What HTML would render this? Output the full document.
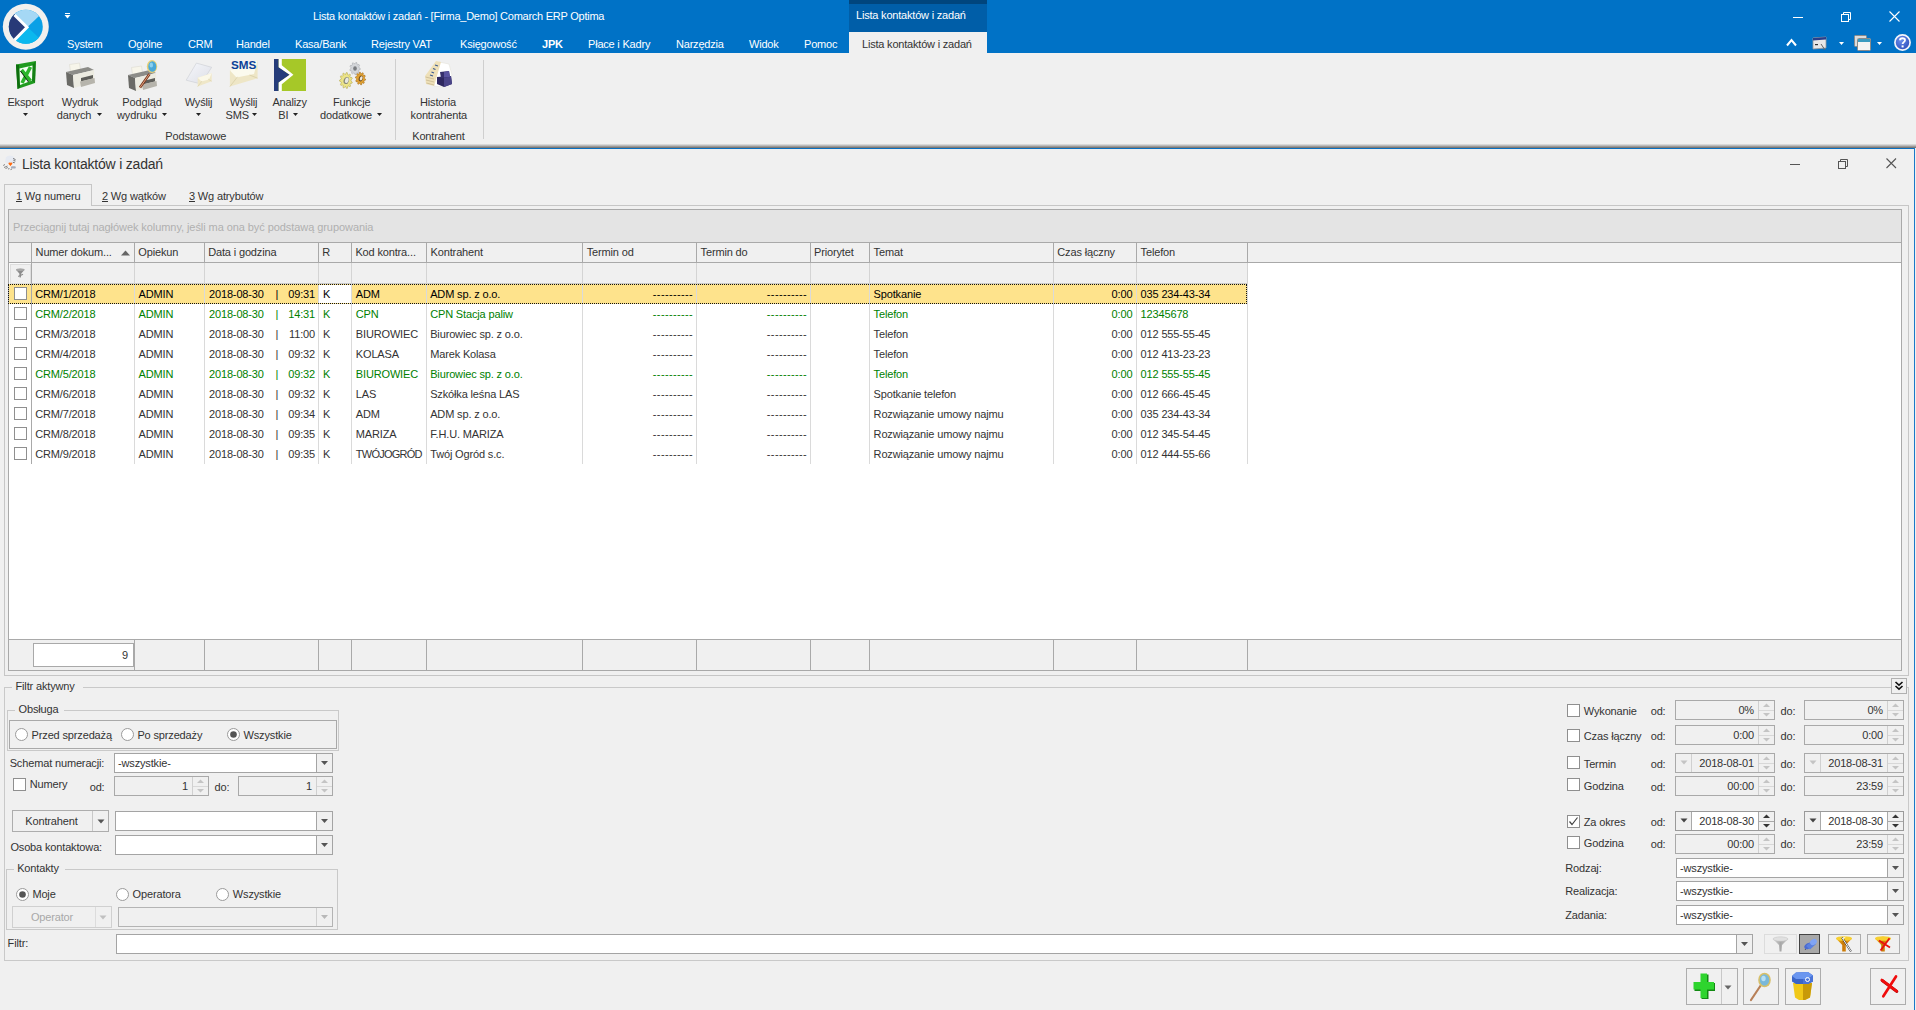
<!DOCTYPE html><html><head><meta charset="utf-8"><style>
html,body{margin:0;padding:0}
body{width:1916px;height:1010px;position:relative;overflow:hidden;background:#f0f0f0;font-family:"Liberation Sans",sans-serif;font-size:11px;color:#333}
.t{position:absolute;white-space:nowrap;letter-spacing:-0.15px}
.r{position:absolute;box-sizing:content-box}
.s{position:absolute}
</style></head><body>
<div class="r" style="left:0px;top:0px;width:1916px;height:53px;background:#0072c6;"></div>
<svg class="s" style="left:0;top:0" width="56" height="54" viewBox="0 0 56 54">
<circle cx="25.8" cy="26.8" r="23" fill="#f2f0ee"/>
<clipPath id="lc"><circle cx="25.8" cy="26.8" r="17"/></clipPath>
<g clip-path="url(#lc)">
<rect x="0" y="0" width="56" height="54" fill="#0aa0e6"/>
<polygon points="0,0 56,0 27.5,27" fill="#a5d8f5"/>
<polygon points="0,54 56,54 27.5,27" fill="#0bb8ee"/>
<polygon points="0,0 27.5,27 0,54" fill="#283a78"/>
</g>
<polyline points="14.5,15 27,27.3 14.5,40" fill="none" stroke="#ffffff" stroke-width="3"/>
</svg>
<svg class="s" style="top:13px;left:64px" width="8" height="8" viewBox="0 0 8 8"><rect x="1" y="0" width="5" height="1" fill="#fff"/><polygon points="0.5,2 6.5,2 3.5,5.5" fill="#fff"/></svg>
<div class="t " style="top:8.69px;font-size:11px;line-height:14px;color:#ffffff;letter-spacing:-0.25px;left:313px;">Lista kontaktów i zadań - [Firma_Demo] Comarch ERP Optima</div>
<div class="r" style="left:849px;top:0px;width:138px;height:4px;background:#00457d;"></div>
<div class="r" style="left:849px;top:4px;width:138px;height:28px;background:#005ea8;"></div>
<div class="r" style="left:849px;top:32px;width:138px;height:22px;background:#f0f0f0;"></div>
<div class="t " style="top:8.19px;font-size:11px;line-height:14px;color:#ffffff;letter-spacing:-0.2px;left:856px;">Lista kontaktów i zadań</div>
<div class="r" style="left:1793px;top:17px;width:10px;height:1px;background:#ffffff;"></div>
<svg class="s" style="left:1841px;top:12px" width="11" height="11" viewBox="0 0 11 11"><rect x="0.5" y="2.5" width="7" height="7" fill="none" stroke="#fff"/><polyline points="2.5,2.5 2.5,0.5 9.5,0.5 9.5,7.5 7.5,7.5" fill="none" stroke="#fff"/></svg>
<svg class="s" style="left:1889px;top:11px" width="11" height="11" viewBox="0 0 11 11"><path d="M0.5,0.5 L10.5,10.5 M10.5,0.5 L0.5,10.5" stroke="#fff" stroke-width="1.1"/></svg>
<div class="t " style="top:37.19px;font-size:11px;line-height:14px;color:#ffffff;letter-spacing:-0.2px;left:67px;">System</div>
<div class="t " style="top:37.19px;font-size:11px;line-height:14px;color:#ffffff;letter-spacing:-0.2px;left:128px;">Ogólne</div>
<div class="t " style="top:37.19px;font-size:11px;line-height:14px;color:#ffffff;letter-spacing:-0.2px;left:188px;">CRM</div>
<div class="t " style="top:37.19px;font-size:11px;line-height:14px;color:#ffffff;letter-spacing:-0.2px;left:236px;">Handel</div>
<div class="t " style="top:37.19px;font-size:11px;line-height:14px;color:#ffffff;letter-spacing:-0.2px;left:295px;">Kasa/Bank</div>
<div class="t " style="top:37.19px;font-size:11px;line-height:14px;color:#ffffff;letter-spacing:-0.2px;left:371px;">Rejestry VAT</div>
<div class="t " style="top:37.19px;font-size:11px;line-height:14px;color:#ffffff;letter-spacing:-0.2px;left:460px;">Księgowość</div>
<div class="t " style="top:37.19px;font-size:11px;line-height:14px;color:#ffffff;font-weight:bold;letter-spacing:-0.2px;left:542px;">JPK</div>
<div class="t " style="top:37.19px;font-size:11px;line-height:14px;color:#ffffff;letter-spacing:-0.2px;left:588px;">Płace i Kadry</div>
<div class="t " style="top:37.19px;font-size:11px;line-height:14px;color:#ffffff;letter-spacing:-0.2px;left:676px;">Narzędzia</div>
<div class="t " style="top:37.19px;font-size:11px;line-height:14px;color:#ffffff;letter-spacing:-0.2px;left:749px;">Widok</div>
<div class="t " style="top:37.19px;font-size:11px;line-height:14px;color:#ffffff;letter-spacing:-0.2px;left:804px;">Pomoc</div>
<div class="t " style="top:37.19px;font-size:11px;line-height:14px;color:#333;letter-spacing:-0.2px;left:862px;">Lista kontaktów i zadań</div>
<svg class="s" style="left:1786px;top:38px" width="11" height="9" viewBox="0 0 11 9"><polyline points="1,7.5 5.5,2 10,7.5" fill="none" stroke="#fff" stroke-width="2"/></svg>
<svg class="s" style="left:1812px;top:36px" width="16" height="15" viewBox="0 0 16 15">
<polygon points="1,2 14,1 14,12 1,13" fill="#e8e8e8" stroke="#9a9a9a" stroke-width="0.8"/>
<polygon points="1,2 14,1 14,3.5 1,4.5" fill="#2a3f8a"/>
<rect x="3" y="8" width="3" height="1.2" fill="#333"/><path d="M9,8 L13,14" stroke="#666" stroke-width="1"/>
</svg>
<svg class="s" style="left:1838px;top:41px" width="7" height="5" viewBox="0 0 7 5"><polygon points="1,1 6,1 3.5,4" fill="#fff"/></svg>
<svg class="s" style="left:1854px;top:35px" width="18" height="16" viewBox="0 0 18 16">
<rect x="0.5" y="0.5" width="12" height="11" rx="1" fill="#dcdcdc" stroke="#8a8a8a"/>
<rect x="3.5" y="3.5" width="13" height="12" rx="1" fill="#f4f4f4" stroke="#8a8a8a"/>
<rect x="4" y="4" width="12" height="3" fill="#3a9ac0"/>
</svg>
<svg class="s" style="left:1876px;top:41px" width="7" height="5" viewBox="0 0 7 5"><polygon points="1,1 6,1 3.5,4" fill="#fff"/></svg>
<svg class="s" style="left:1893px;top:33px" width="19" height="19" viewBox="0 0 19 19">
<defs><radialGradient id="hg" cx="0.4" cy="0.35" r="0.75"><stop offset="0" stop-color="#6c90ec"/><stop offset="1" stop-color="#2848b8"/></radialGradient></defs>
<circle cx="9.5" cy="9.5" r="7.6" fill="url(#hg)" stroke="#f2f4fa" stroke-width="1.7"/>
<path d="M7,7.2 C7,4.6 12,4.6 12,7.2 C12,9 9.6,9.2 9.6,11" fill="none" stroke="#fff" stroke-width="1.8"/>
<rect x="8.6" y="12.4" width="2" height="2" fill="#fff"/>
</svg>
<div class="r" style="left:0px;top:53px;width:1916px;height:92px;background:#f0f0f0;"></div>
<div class="s" style="left:0;top:144px;width:1916px;height:4px;background:linear-gradient(#e6e6e6,#b8b8b8 40%,#6e6a66)"></div>
<div class="r" style="left:0px;top:148px;width:1915px;height:1px;background:#0a6fc0;"></div>
<div class="r" style="left:395px;top:59px;width:1px;height:81px;background:#cfcfcf;"></div>
<div class="r" style="left:483px;top:60px;width:1px;height:79px;background:#cfcfcf;"></div>
<svg class="s" style="left:15px;top:60px" width="23" height="30" viewBox="0 0 23 30">
<polygon points="1,4.5 20.8,1 20,23 2.5,29" fill="#1f9a1f"/>
<polygon points="1,4.5 4,5 5,27.5 2.5,29" fill="#0e6e0e"/>
<polygon points="17.5,4.5 20.8,1 20,23 17,20.5" fill="#138013"/>
<polygon points="4.5,8.5 17.5,5.5 17,20.5 5,25" fill="#f4fff4"/>
<path d="M6.5,10 L15.5,21 M15.5,7 L7,23" stroke="#2cb52c" stroke-width="3.6"/>
<path d="M5.5,11 L13.5,22" stroke="#111" stroke-width="0.9"/>
</svg>
<svg class="s" style="left:65px;top:62px" width="30" height="27" viewBox="0 0 30 27">
<polygon points="4.5,2.5 14.5,1 15.5,8 5.5,9.5" fill="#f7f5ea" stroke="#dcdad0" stroke-width="0.6"/>
<polygon points="1,10 23,5 29,8 8,13" fill="#8c8c88"/>
<polygon points="1,10 8,13 9,26 2,23" fill="#6a6a66"/>
<polygon points="8,13 29,8 29.5,20 9,26" fill="#ecebe1"/>
<polygon points="16,16 28,13 28,16.5 16,19.5" fill="#5e5e5a"/>
<polygon points="15,19.5 29.5,16 30,21 16,25" fill="#b6b4ac"/>
</svg>
<svg class="s" style="left:127px;top:65px" width="30" height="27" viewBox="0 0 30 27">
<polygon points="4.5,2.5 14.5,1 15.5,8 5.5,9.5" fill="#f7f5ea" stroke="#dcdad0" stroke-width="0.6"/>
<polygon points="1,10 23,5 29,8 8,13" fill="#8c8c88"/>
<polygon points="1,10 8,13 9,26 2,23" fill="#6a6a66"/>
<polygon points="8,13 29,8 29.5,20 9,26" fill="#ecebe1"/>
<polygon points="16,16 28,13 28,16.5 16,19.5" fill="#5e5e5a"/>
<polygon points="15,19.5 29.5,16 30,21 16,25" fill="#b6b4ac"/>
</svg>
<svg class="s" style="left:137px;top:58px" width="24" height="32" viewBox="0 0 24 32">
<path d="M3,29.5 L12.5,16" stroke="#7a3a20" stroke-width="2.6"/>
<path d="M3,29.5 L12.5,16" stroke="#e0a080" stroke-width="1"/>
<ellipse cx="15" cy="8.5" rx="5.2" ry="6.5" fill="#e8d078"/>
<ellipse cx="15.3" cy="8.5" rx="4" ry="5.3" fill="#4aa8d8"/>
<ellipse cx="14.3" cy="7" rx="1.8" ry="2.6" fill="#8ad0f0"/>
</svg>
<svg class="s" style="left:185px;top:62px" width="28" height="26" viewBox="0 0 28 26">
<defs><linearGradient id="pg" x1="0" y1="0" x2="1" y2="1"><stop offset="0" stop-color="#f6f7fb"/><stop offset="1" stop-color="#dcdee6"/></linearGradient></defs>
<polygon points="11.4,1.1 26.7,5.3 16,22 1.2,18.2" fill="url(#pg)" stroke="#c4c6cc" stroke-width="0.5"/>
<polygon points="12.7,15.7 26.7,11.3 26.7,19.3 12.7,24.6" fill="#efe7c8"/>
<polygon points="12.7,15.7 26.7,11.3 24,17.5 16.5,19.5" fill="#fbf8e8"/>
<path d="M12.7,24.6 L17,19 M26.7,19.3 L23,17" stroke="#d8cea8" stroke-width="0.6"/>
</svg>
<svg class="s" style="left:229px;top:59px" width="30" height="29" viewBox="0 0 30 29">
<polygon points="0.9,11.6 28.6,1.4 28.6,19.2 0.9,27.6" fill="#eee6c6"/>
<polygon points="1,11.6 28.6,1.4 25,15 7.5,18.5" fill="#fbfaee"/>
<path d="M0.9,27.6 L8.5,17.8 M28.6,19.2 L20.5,16" stroke="#d6cca4" stroke-width="0.7"/>
<text x="2" y="10" textLength="25.3" lengthAdjust="spacingAndGlyphs" font-family="Liberation Sans" font-weight="bold" font-size="11.2" fill="#0b3f98">SMS</text>
</svg>
<svg class="s" style="left:274px;top:59px" width="32" height="32" viewBox="0 0 32 32">
<rect x="0" y="0" width="32" height="32" fill="#a6c828"/>
<polygon points="0,0 4.7,0 4.7,8.3 15.7,15.8 4.7,23.5 4.7,32 0,32" fill="#253c7a"/>
<polygon points="4.7,0 7.8,0 7.8,6.3 19.4,15.8 7.8,25.2 7.8,32 4.7,32 4.7,23.5 15.7,15.8 4.7,8.3" fill="#ffffff"/>
</svg>
<svg class="s" style="left:337px;top:61px" width="31" height="29" viewBox="0 0 31 29">
<polygon points="23.27,7.50 23.19,8.58 21.83,9.14 21.53,9.90 22.04,11.49 21.39,12.25 20.04,11.66 19.40,12.01 18.92,13.61 18.00,13.70 17.29,12.23 16.60,12.01 15.37,12.87 14.61,12.25 14.87,10.59 14.47,9.90 13.05,9.62 12.81,8.58 13.92,7.50 13.98,6.67 13.05,5.38 13.44,4.40 14.87,4.41 15.38,3.82 15.36,2.13 16.20,1.67 17.29,2.77 18.00,2.70 18.92,1.39 19.80,1.67 20.04,3.34 20.62,3.82 22.04,3.51 22.56,4.40 21.83,5.86 22.02,6.67" fill="#d4d6da" stroke="#9a9ca0" stroke-width="0.5"/>
<ellipse cx="18" cy="7.5" rx="1.8" ry="2.2" fill="#7a7c80"/>
<polygon points="15.27,21.09 15.03,22.19 13.39,22.39 13.01,23.14 13.59,25.08 12.91,25.84 11.44,24.90 10.80,25.28 10.45,27.29 9.55,27.47 8.72,25.69 8.01,25.58 6.85,27.03 6.01,26.58 6.08,24.52 5.54,23.95 3.93,24.38 3.43,23.43 4.38,21.75 4.17,20.90 2.62,20.18 2.61,19.04 4.14,18.27 4.33,17.42 3.34,15.77 3.82,14.80 5.44,15.18 5.97,14.59 5.85,12.53 6.68,12.04 7.88,13.46 8.58,13.32 9.37,11.51 10.27,11.66 10.67,13.66 11.32,14.02 12.76,13.03 13.46,13.76 12.93,15.71 13.32,16.45 14.96,16.60 15.23,17.69 13.94,18.97 13.95,19.85" fill="#ece488" stroke="#a89c40" stroke-width="0.5"/>
<ellipse cx="9.3" cy="19.5" rx="2.6" ry="3.6" fill="#8a8a78" transform="rotate(20 9.3 19.5)"/>
<ellipse cx="9.8" cy="19.3" rx="1.8" ry="2.8" fill="#e8e8e0" transform="rotate(20 9.8 19.3)"/>
<polygon points="28.59,18.14 28.45,19.13 27.16,19.51 26.86,20.20 27.32,21.76 26.74,22.45 25.52,21.82 24.95,22.16 24.59,23.75 23.79,23.89 23.10,22.48 22.48,22.34 21.44,23.36 20.73,22.88 20.84,21.23 20.40,20.66 19.08,20.73 18.73,19.82 19.59,18.56 19.51,17.79 18.41,16.86 18.55,15.87 19.84,15.49 20.14,14.80 19.68,13.24 20.26,12.55 21.48,13.18 22.05,12.84 22.41,11.25 23.21,11.11 23.90,12.52 24.52,12.66 25.56,11.64 26.27,12.12 26.16,13.77 26.60,14.34 27.92,14.27 28.27,15.18 27.41,16.44 27.49,17.21" fill="#e0a030" stroke="#986010" stroke-width="0.5"/>
<ellipse cx="23.8" cy="17.5" rx="2" ry="3" fill="#6a4a20" transform="rotate(20 23.8 17.5)"/>
<ellipse cx="24.2" cy="17.3" rx="1.3" ry="2.2" fill="#f0e8d8" transform="rotate(20 24.2 17.3)"/>
</svg>
<svg class="s" style="left:415px;top:55px" width="50" height="37" viewBox="415 55 50 37">
<polygon points="439,62 449,64 452,75 444,87 434,86" fill="#ffffff" stroke="#e4e2da" stroke-width="0.6"/>
<polygon points="436,61 441,62 434,86 426,84 425,76" fill="#eee0b8"/>
<path d="M425.5,77 L434,79 M426,80 L434,82 M426.5,83 L434,85" stroke="#c8b890" stroke-width="0.8"/>
<path d="M435,65 L438,66 M433,68.5 L435.5,69.5 M431.5,72 L434,73 M430,75 L433,76" stroke="#3a5a90" stroke-width="1.2"/>
<polygon points="437,77 451,76 452,84 444,87 437,84" fill="#2e2860"/>
<polygon points="444,78 451,76 452,84 444,87" fill="#4a4488"/>
<polygon points="440,72 449,71 450,77 441,78" fill="#36306c"/>
<polygon points="444,72 449,71 450,77 444,77.5" fill="#5a54a0"/>
</svg>
<div class="t " style="top:95.19px;font-size:11px;line-height:14px;left:-14.5px;width:80px;text-align:center;">Eksport</div>
<svg class="s" style="left:23px;top:113px" width="5" height="3" viewBox="0 0 5 3"><polygon points="0,0 5,0 2.5,3" fill="#222"/></svg>
<div class="t " style="top:95.19px;font-size:11px;line-height:14px;left:40.0px;width:80px;text-align:center;">Wydruk</div>
<div class="t " style="top:108.19px;font-size:11px;line-height:14px;left:34.0px;width:80px;text-align:center;">danych</div>
<svg class="s" style="left:97px;top:113px" width="5" height="3" viewBox="0 0 5 3"><polygon points="0,0 5,0 2.5,3" fill="#222"/></svg>
<div class="t " style="top:95.19px;font-size:11px;line-height:14px;left:102.0px;width:80px;text-align:center;">Podgląd</div>
<div class="t " style="top:108.19px;font-size:11px;line-height:14px;left:97.0px;width:80px;text-align:center;">wydruku</div>
<svg class="s" style="left:162px;top:113px" width="5" height="3" viewBox="0 0 5 3"><polygon points="0,0 5,0 2.5,3" fill="#222"/></svg>
<div class="t " style="top:95.19px;font-size:11px;line-height:14px;left:158.5px;width:80px;text-align:center;">Wyślij</div>
<svg class="s" style="left:196px;top:113px" width="5" height="3" viewBox="0 0 5 3"><polygon points="0,0 5,0 2.5,3" fill="#222"/></svg>
<div class="t " style="top:95.19px;font-size:11px;line-height:14px;left:203.5px;width:80px;text-align:center;">Wyślij</div>
<div class="t " style="top:108.19px;font-size:11px;line-height:14px;left:197.2px;width:80px;text-align:center;">SMS</div>
<svg class="s" style="left:252px;top:113px" width="5" height="3" viewBox="0 0 5 3"><polygon points="0,0 5,0 2.5,3" fill="#222"/></svg>
<div class="t " style="top:95.19px;font-size:11px;line-height:14px;left:249.60000000000002px;width:80px;text-align:center;">Analizy</div>
<div class="t " style="top:108.19px;font-size:11px;line-height:14px;left:243.39999999999998px;width:80px;text-align:center;">BI</div>
<svg class="s" style="left:293px;top:113px" width="5" height="3" viewBox="0 0 5 3"><polygon points="0,0 5,0 2.5,3" fill="#222"/></svg>
<div class="t " style="top:95.19px;font-size:11px;line-height:14px;left:311.7px;width:80px;text-align:center;">Funkcje</div>
<div class="t " style="top:108.19px;font-size:11px;line-height:14px;left:306.0px;width:80px;text-align:center;">dodatkowe</div>
<svg class="s" style="left:377px;top:113px" width="5" height="3" viewBox="0 0 5 3"><polygon points="0,0 5,0 2.5,3" fill="#222"/></svg>
<div class="t " style="top:95.19px;font-size:11px;line-height:14px;left:398.0px;width:80px;text-align:center;">Historia</div>
<div class="t " style="top:108.19px;font-size:11px;line-height:14px;left:398.8px;width:80px;text-align:center;">kontrahenta</div>
<div class="t " style="top:129.19px;font-size:11px;line-height:14px;left:145.8px;width:100px;text-align:center;">Podstawowe</div>
<div class="t " style="top:129.19px;font-size:11px;line-height:14px;left:388.4px;width:100px;text-align:center;">Kontrahent</div>
<div class="r" style="left:1914px;top:148px;width:1px;height:862px;background:#1a78c8;"></div>
<svg class="s" style="left:0px;top:150px" width="20" height="25" viewBox="0 150 20 25">
<path d="M6,157 Q9,154.5 13,156 L15.5,160 L14,163.5 L9,164 L5,162 Z" fill="#e6eaf2"/>
<path d="M13,158.5 L15.5,159.5 M13.5,160.5 L15.5,161 M12.8,162.3 L14.8,162.8" stroke="#555" stroke-width="0.8"/>
<path d="M3.2,165.5 L5,164.5 M4,167.5 L7.5,166 M5.5,168.5 L7.8,167.5" stroke="#777" stroke-width="0.9"/>
<path d="M8.6,163.2 L12.2,163.2 L10.4,166.2 Z" fill="#ff6a10"/><circle cx="9.6" cy="163.6" r="1.1" fill="#ff6a10"/><circle cx="11.2" cy="163.6" r="1.1" fill="#ff6a10"/>
<rect x="11" y="166.2" width="4.8" height="2.4" rx="1" fill="#a4acbc"/>
<path d="M8,169 L9.5,168.6 M10.5,169.6 L12,169" stroke="#666" stroke-width="0.8"/>
</svg>
<div class="t " style="top:154.85px;font-size:14px;line-height:18px;color:#333;letter-spacing:-0.2px;left:22px;">Lista kontaktów i zadań</div>
<div class="r" style="left:1790px;top:164px;width:10px;height:1px;background:#555;"></div>
<svg class="s" style="left:1838px;top:159px" width="11" height="11" viewBox="0 0 11 11"><rect x="0.5" y="2.5" width="7" height="7" fill="none" stroke="#555"/><polyline points="2.5,2.5 2.5,0.5 9.5,0.5 9.5,7.5 7.5,7.5" fill="none" stroke="#555"/></svg>
<svg class="s" style="left:1886px;top:158px" width="11" height="11" viewBox="0 0 11 11"><path d="M0.5,0.5 L10,10 M10,0.5 L0.5,10" stroke="#555" stroke-width="1.1"/></svg>
<div class="r" style="left:4px;top:184px;width:88px;height:1px;background:#c6c6c6;"></div>
<div class="r" style="left:4px;top:184px;width:1px;height:492px;background:#c6c6c6;"></div>
<div class="r" style="left:91px;top:184px;width:1px;height:22px;background:#c6c6c6;"></div>
<div class="r" style="left:91px;top:205px;width:1818px;height:1px;background:#c6c6c6;"></div>
<div class="r" style="left:1908px;top:205px;width:1px;height:471px;background:#c6c6c6;"></div>
<div class="r" style="left:4px;top:675px;width:1905px;height:1px;background:#c6c6c6;"></div>
<div class="t " style="top:188.69px;font-size:11px;line-height:14px;color:#333;left:16px;"><span style="text-decoration:underline">1</span> Wg numeru</div>
<div class="t " style="top:188.69px;font-size:11px;line-height:14px;color:#333;left:102px;"><span style="text-decoration:underline">2</span> Wg wątków</div>
<div class="t " style="top:188.69px;font-size:11px;line-height:14px;color:#333;left:189px;"><span style="text-decoration:underline">3</span> Wg atrybutów</div>
<div class="r" style="left:8px;top:209px;width:1892px;height:460px;border:1px solid #a9a9a9;background:#ffffff;"></div>
<div class="r" style="left:9px;top:210px;width:1892px;height:32px;background:#e4e4e4;"></div>
<div class="r" style="left:9px;top:242px;width:1892px;height:1px;background:#a9a9a9;"></div>
<div class="t " style="top:220.19px;font-size:11px;line-height:14px;color:#b0b0b0;letter-spacing:-0.07px;left:13px;">Przeciągnij tutaj nagłówek kolumny, jeśli ma ona być podstawą grupowania</div>
<div class="r" style="left:9px;top:243px;width:1892px;height:19px;background:#f0f0f0;"></div>
<div class="r" style="left:9px;top:262px;width:1892px;height:1px;background:#a9a9a9;"></div>
<div class="r" style="left:31px;top:243px;width:1px;height:19px;background:#a9a9a9;"></div>
<div class="r" style="left:134px;top:243px;width:1px;height:19px;background:#a9a9a9;"></div>
<div class="r" style="left:204px;top:243px;width:1px;height:19px;background:#a9a9a9;"></div>
<div class="r" style="left:318px;top:243px;width:1px;height:19px;background:#a9a9a9;"></div>
<div class="r" style="left:351px;top:243px;width:1px;height:19px;background:#a9a9a9;"></div>
<div class="r" style="left:426px;top:243px;width:1px;height:19px;background:#a9a9a9;"></div>
<div class="r" style="left:582px;top:243px;width:1px;height:19px;background:#a9a9a9;"></div>
<div class="r" style="left:696px;top:243px;width:1px;height:19px;background:#a9a9a9;"></div>
<div class="r" style="left:810px;top:243px;width:1px;height:19px;background:#a9a9a9;"></div>
<div class="r" style="left:869px;top:243px;width:1px;height:19px;background:#a9a9a9;"></div>
<div class="r" style="left:1053px;top:243px;width:1px;height:19px;background:#a9a9a9;"></div>
<div class="r" style="left:1136px;top:243px;width:1px;height:19px;background:#a9a9a9;"></div>
<div class="r" style="left:1247px;top:243px;width:1px;height:19px;background:#a9a9a9;"></div>
<div class="t " style="top:245.19px;font-size:11px;line-height:14px;color:#333;left:35.6px;">Numer dokum...</div>
<div class="t " style="top:245.19px;font-size:11px;line-height:14px;color:#333;left:138.3px;">Opiekun</div>
<div class="t " style="top:245.19px;font-size:11px;line-height:14px;color:#333;left:208.2px;">Data i godzina</div>
<div class="t " style="top:245.19px;font-size:11px;line-height:14px;color:#333;left:322.3px;">R</div>
<div class="t " style="top:245.19px;font-size:11px;line-height:14px;color:#333;left:355.4px;">Kod kontra...</div>
<div class="t " style="top:245.19px;font-size:11px;line-height:14px;color:#333;left:430.6px;">Kontrahent</div>
<div class="t " style="top:245.19px;font-size:11px;line-height:14px;color:#333;left:586.7px;">Termin od</div>
<div class="t " style="top:245.19px;font-size:11px;line-height:14px;color:#333;left:700.6px;">Termin do</div>
<div class="t " style="top:245.19px;font-size:11px;line-height:14px;color:#333;left:814px;">Priorytet</div>
<div class="t " style="top:245.19px;font-size:11px;line-height:14px;color:#333;left:873.6px;">Temat</div>
<div class="t " style="top:245.19px;font-size:11px;line-height:14px;color:#333;left:1057.3px;">Czas łączny</div>
<div class="t " style="top:245.19px;font-size:11px;line-height:14px;color:#333;left:1140.6px;">Telefon</div>
<svg class="s" style="left:121px;top:250px" width="10" height="6" viewBox="0 0 10 6"><polygon points="0,5.5 9,5.5 4.5,0.5" fill="#666"/></svg>
<div class="r" style="left:9px;top:263px;width:1239px;height:21px;background:#f0f0f0;"></div>
<div class="r" style="left:9px;top:283px;width:1239px;height:1px;background:#c8c8c8;"></div>
<div class="r" style="left:31px;top:263px;width:1px;height:21px;background:#a9a9a9;"></div>
<div class="r" style="left:134px;top:263px;width:1px;height:21px;background:#d4d4d4;"></div>
<div class="r" style="left:204px;top:263px;width:1px;height:21px;background:#d4d4d4;"></div>
<div class="r" style="left:318px;top:263px;width:1px;height:21px;background:#d4d4d4;"></div>
<div class="r" style="left:351px;top:263px;width:1px;height:21px;background:#d4d4d4;"></div>
<div class="r" style="left:426px;top:263px;width:1px;height:21px;background:#d4d4d4;"></div>
<div class="r" style="left:582px;top:263px;width:1px;height:21px;background:#d4d4d4;"></div>
<div class="r" style="left:696px;top:263px;width:1px;height:21px;background:#d4d4d4;"></div>
<div class="r" style="left:810px;top:263px;width:1px;height:21px;background:#d4d4d4;"></div>
<div class="r" style="left:869px;top:263px;width:1px;height:21px;background:#d4d4d4;"></div>
<div class="r" style="left:1053px;top:263px;width:1px;height:21px;background:#d4d4d4;"></div>
<div class="r" style="left:1136px;top:263px;width:1px;height:21px;background:#d4d4d4;"></div>
<div class="r" style="left:1247px;top:263px;width:1px;height:21px;background:#d4d4d4;"></div>
<div class="r" style="left:9px;top:263px;width:22px;height:1px;background:#fafafa;"></div>
<div class="r" style="left:9px;top:263px;width:1px;height:21px;background:#fafafa;"></div>
<div class="r" style="left:10px;top:264px;width:19px;height:18px;border:1px solid #dedede;"></div>
<svg class="s" style="left:8px;top:262px" width="24" height="22" viewBox="8 262 24 22">
<path d="M16,269.8 Q20.3,267.6 24.6,269.8 L21.3,273.5 L20.8,277.6 L19.6,277.6 L19.3,273.5 Z" fill="#8c8c8c"/>
<ellipse cx="20.3" cy="269.8" rx="4.3" ry="1.2" fill="#a8a8a8"/>
<path d="M18.2,276.6 L23,274.2" stroke="#8c8c8c" stroke-width="1.1"/>
</svg>
<div class="r" style="left:9px;top:284px;width:1239px;height:20px;background:#fee38c;"></div>
<div class="r" style="left:319px;top:285px;width:32px;height:18px;background:#ffffff;"></div>
<div class="r" style="left:31px;top:263px;width:1px;height:201px;background:#a9a9a9;"></div>
<div class="r" style="left:134px;top:284px;width:1px;height:180px;background:#dadada;"></div>
<div class="r" style="left:204px;top:284px;width:1px;height:180px;background:#dadada;"></div>
<div class="r" style="left:318px;top:284px;width:1px;height:180px;background:#dadada;"></div>
<div class="r" style="left:351px;top:284px;width:1px;height:180px;background:#dadada;"></div>
<div class="r" style="left:426px;top:284px;width:1px;height:180px;background:#dadada;"></div>
<div class="r" style="left:582px;top:284px;width:1px;height:180px;background:#dadada;"></div>
<div class="r" style="left:696px;top:284px;width:1px;height:180px;background:#dadada;"></div>
<div class="r" style="left:810px;top:284px;width:1px;height:180px;background:#dadada;"></div>
<div class="r" style="left:869px;top:284px;width:1px;height:180px;background:#dadada;"></div>
<div class="r" style="left:1053px;top:284px;width:1px;height:180px;background:#dadada;"></div>
<div class="r" style="left:1136px;top:284px;width:1px;height:180px;background:#dadada;"></div>
<div class="r" style="left:1247px;top:284px;width:1px;height:180px;background:#dadada;"></div>
<div class="s" style="left:8px;top:284px;width:1237px;height:18px;border:1px dotted #111"></div>
<div class="r" style="left:14px;top:287px;width:11px;height:11px;border:1px solid #8f8f8f;background:#ffffff;"></div>
<div class="t " style="top:287.49px;font-size:11px;line-height:14px;color:#000;left:35.2px;">CRM/1/2018</div>
<div class="t " style="top:287.49px;font-size:11px;line-height:14px;color:#000;left:138.6px;">ADMIN</div>
<div class="t " style="top:287.49px;font-size:11px;line-height:14px;color:#000;left:209px;">2018-08-30</div>
<div class="t " style="top:287.49px;font-size:11px;line-height:14px;color:#000;left:275.5px;">|</div>
<div class="t " style="top:287.49px;font-size:11px;line-height:14px;color:#000;left:255px;width:60px;text-align:right;">09:31</div>
<div class="t " style="top:287.49px;font-size:11px;line-height:14px;color:#000;left:322.9px;">K</div>
<div class="t " style="top:287.49px;font-size:11px;line-height:14px;color:#000;left:355.8px;">ADM</div>
<div class="t " style="top:287.49px;font-size:11px;line-height:14px;color:#000;left:430.2px;">ADM sp. z o.o.</div>
<div class="t " style="top:287.49px;font-size:11px;line-height:14px;color:#000;letter-spacing:0.35px;left:613px;width:80px;text-align:right;">----------</div>
<div class="t " style="top:287.49px;font-size:11px;line-height:14px;color:#000;letter-spacing:0.35px;left:727px;width:80px;text-align:right;">----------</div>
<div class="t " style="top:287.49px;font-size:11px;line-height:14px;color:#000;left:873.6px;">Spotkanie</div>
<div class="t " style="top:287.49px;font-size:11px;line-height:14px;color:#000;left:1072.4px;width:60px;text-align:right;">0:00</div>
<div class="t " style="top:287.49px;font-size:11px;line-height:14px;color:#000;left:1140.6px;">035 234-43-34</div>
<div class="r" style="left:14px;top:307px;width:11px;height:11px;border:1px solid #8f8f8f;background:#ffffff;"></div>
<div class="t " style="top:307.49px;font-size:11px;line-height:14px;color:#008000;left:35.2px;">CRM/2/2018</div>
<div class="t " style="top:307.49px;font-size:11px;line-height:14px;color:#008000;left:138.6px;">ADMIN</div>
<div class="t " style="top:307.49px;font-size:11px;line-height:14px;color:#008000;left:209px;">2018-08-30</div>
<div class="t " style="top:307.49px;font-size:11px;line-height:14px;color:#008000;left:275.5px;">|</div>
<div class="t " style="top:307.49px;font-size:11px;line-height:14px;color:#008000;left:255px;width:60px;text-align:right;">14:31</div>
<div class="t " style="top:307.49px;font-size:11px;line-height:14px;color:#008000;left:322.9px;">K</div>
<div class="t " style="top:307.49px;font-size:11px;line-height:14px;color:#008000;left:355.8px;">CPN</div>
<div class="t " style="top:307.49px;font-size:11px;line-height:14px;color:#008000;left:430.2px;">CPN Stacja paliw</div>
<div class="t " style="top:307.49px;font-size:11px;line-height:14px;color:#008000;letter-spacing:0.35px;left:613px;width:80px;text-align:right;">----------</div>
<div class="t " style="top:307.49px;font-size:11px;line-height:14px;color:#008000;letter-spacing:0.35px;left:727px;width:80px;text-align:right;">----------</div>
<div class="t " style="top:307.49px;font-size:11px;line-height:14px;color:#008000;left:873.6px;">Telefon</div>
<div class="t " style="top:307.49px;font-size:11px;line-height:14px;color:#008000;left:1072.4px;width:60px;text-align:right;">0:00</div>
<div class="t " style="top:307.49px;font-size:11px;line-height:14px;color:#008000;left:1140.6px;">12345678</div>
<div class="r" style="left:14px;top:327px;width:11px;height:11px;border:1px solid #8f8f8f;background:#ffffff;"></div>
<div class="t " style="top:327.49px;font-size:11px;line-height:14px;color:#333333;left:35.2px;">CRM/3/2018</div>
<div class="t " style="top:327.49px;font-size:11px;line-height:14px;color:#333333;left:138.6px;">ADMIN</div>
<div class="t " style="top:327.49px;font-size:11px;line-height:14px;color:#333333;left:209px;">2018-08-30</div>
<div class="t " style="top:327.49px;font-size:11px;line-height:14px;color:#333333;left:275.5px;">|</div>
<div class="t " style="top:327.49px;font-size:11px;line-height:14px;color:#333333;left:255px;width:60px;text-align:right;">11:00</div>
<div class="t " style="top:327.49px;font-size:11px;line-height:14px;color:#333333;left:322.9px;">K</div>
<div class="t " style="top:327.49px;font-size:11px;line-height:14px;color:#333333;left:355.8px;">BIUROWIEC</div>
<div class="t " style="top:327.49px;font-size:11px;line-height:14px;color:#333333;left:430.2px;">Biurowiec sp. z o.o.</div>
<div class="t " style="top:327.49px;font-size:11px;line-height:14px;color:#333333;letter-spacing:0.35px;left:613px;width:80px;text-align:right;">----------</div>
<div class="t " style="top:327.49px;font-size:11px;line-height:14px;color:#333333;letter-spacing:0.35px;left:727px;width:80px;text-align:right;">----------</div>
<div class="t " style="top:327.49px;font-size:11px;line-height:14px;color:#333333;left:873.6px;">Telefon</div>
<div class="t " style="top:327.49px;font-size:11px;line-height:14px;color:#333333;left:1072.4px;width:60px;text-align:right;">0:00</div>
<div class="t " style="top:327.49px;font-size:11px;line-height:14px;color:#333333;left:1140.6px;">012 555-55-45</div>
<div class="r" style="left:14px;top:347px;width:11px;height:11px;border:1px solid #8f8f8f;background:#ffffff;"></div>
<div class="t " style="top:347.49px;font-size:11px;line-height:14px;color:#333333;left:35.2px;">CRM/4/2018</div>
<div class="t " style="top:347.49px;font-size:11px;line-height:14px;color:#333333;left:138.6px;">ADMIN</div>
<div class="t " style="top:347.49px;font-size:11px;line-height:14px;color:#333333;left:209px;">2018-08-30</div>
<div class="t " style="top:347.49px;font-size:11px;line-height:14px;color:#333333;left:275.5px;">|</div>
<div class="t " style="top:347.49px;font-size:11px;line-height:14px;color:#333333;left:255px;width:60px;text-align:right;">09:32</div>
<div class="t " style="top:347.49px;font-size:11px;line-height:14px;color:#333333;left:322.9px;">K</div>
<div class="t " style="top:347.49px;font-size:11px;line-height:14px;color:#333333;left:355.8px;">KOLASA</div>
<div class="t " style="top:347.49px;font-size:11px;line-height:14px;color:#333333;left:430.2px;">Marek Kolasa</div>
<div class="t " style="top:347.49px;font-size:11px;line-height:14px;color:#333333;letter-spacing:0.35px;left:613px;width:80px;text-align:right;">----------</div>
<div class="t " style="top:347.49px;font-size:11px;line-height:14px;color:#333333;letter-spacing:0.35px;left:727px;width:80px;text-align:right;">----------</div>
<div class="t " style="top:347.49px;font-size:11px;line-height:14px;color:#333333;left:873.6px;">Telefon</div>
<div class="t " style="top:347.49px;font-size:11px;line-height:14px;color:#333333;left:1072.4px;width:60px;text-align:right;">0:00</div>
<div class="t " style="top:347.49px;font-size:11px;line-height:14px;color:#333333;left:1140.6px;">012 413-23-23</div>
<div class="r" style="left:14px;top:367px;width:11px;height:11px;border:1px solid #8f8f8f;background:#ffffff;"></div>
<div class="t " style="top:367.49px;font-size:11px;line-height:14px;color:#008000;left:35.2px;">CRM/5/2018</div>
<div class="t " style="top:367.49px;font-size:11px;line-height:14px;color:#008000;left:138.6px;">ADMIN</div>
<div class="t " style="top:367.49px;font-size:11px;line-height:14px;color:#008000;left:209px;">2018-08-30</div>
<div class="t " style="top:367.49px;font-size:11px;line-height:14px;color:#008000;left:275.5px;">|</div>
<div class="t " style="top:367.49px;font-size:11px;line-height:14px;color:#008000;left:255px;width:60px;text-align:right;">09:32</div>
<div class="t " style="top:367.49px;font-size:11px;line-height:14px;color:#008000;left:322.9px;">K</div>
<div class="t " style="top:367.49px;font-size:11px;line-height:14px;color:#008000;left:355.8px;">BIUROWIEC</div>
<div class="t " style="top:367.49px;font-size:11px;line-height:14px;color:#008000;left:430.2px;">Biurowiec sp. z o.o.</div>
<div class="t " style="top:367.49px;font-size:11px;line-height:14px;color:#008000;letter-spacing:0.35px;left:613px;width:80px;text-align:right;">----------</div>
<div class="t " style="top:367.49px;font-size:11px;line-height:14px;color:#008000;letter-spacing:0.35px;left:727px;width:80px;text-align:right;">----------</div>
<div class="t " style="top:367.49px;font-size:11px;line-height:14px;color:#008000;left:873.6px;">Telefon</div>
<div class="t " style="top:367.49px;font-size:11px;line-height:14px;color:#008000;left:1072.4px;width:60px;text-align:right;">0:00</div>
<div class="t " style="top:367.49px;font-size:11px;line-height:14px;color:#008000;left:1140.6px;">012 555-55-45</div>
<div class="r" style="left:14px;top:387px;width:11px;height:11px;border:1px solid #8f8f8f;background:#ffffff;"></div>
<div class="t " style="top:387.49px;font-size:11px;line-height:14px;color:#333333;left:35.2px;">CRM/6/2018</div>
<div class="t " style="top:387.49px;font-size:11px;line-height:14px;color:#333333;left:138.6px;">ADMIN</div>
<div class="t " style="top:387.49px;font-size:11px;line-height:14px;color:#333333;left:209px;">2018-08-30</div>
<div class="t " style="top:387.49px;font-size:11px;line-height:14px;color:#333333;left:275.5px;">|</div>
<div class="t " style="top:387.49px;font-size:11px;line-height:14px;color:#333333;left:255px;width:60px;text-align:right;">09:32</div>
<div class="t " style="top:387.49px;font-size:11px;line-height:14px;color:#333333;left:322.9px;">K</div>
<div class="t " style="top:387.49px;font-size:11px;line-height:14px;color:#333333;left:355.8px;">LAS</div>
<div class="t " style="top:387.49px;font-size:11px;line-height:14px;color:#333333;left:430.2px;">Szkółka leśna LAS</div>
<div class="t " style="top:387.49px;font-size:11px;line-height:14px;color:#333333;letter-spacing:0.35px;left:613px;width:80px;text-align:right;">----------</div>
<div class="t " style="top:387.49px;font-size:11px;line-height:14px;color:#333333;letter-spacing:0.35px;left:727px;width:80px;text-align:right;">----------</div>
<div class="t " style="top:387.49px;font-size:11px;line-height:14px;color:#333333;left:873.6px;">Spotkanie telefon</div>
<div class="t " style="top:387.49px;font-size:11px;line-height:14px;color:#333333;left:1072.4px;width:60px;text-align:right;">0:00</div>
<div class="t " style="top:387.49px;font-size:11px;line-height:14px;color:#333333;left:1140.6px;">012 666-45-45</div>
<div class="r" style="left:14px;top:407px;width:11px;height:11px;border:1px solid #8f8f8f;background:#ffffff;"></div>
<div class="t " style="top:407.49px;font-size:11px;line-height:14px;color:#333333;left:35.2px;">CRM/7/2018</div>
<div class="t " style="top:407.49px;font-size:11px;line-height:14px;color:#333333;left:138.6px;">ADMIN</div>
<div class="t " style="top:407.49px;font-size:11px;line-height:14px;color:#333333;left:209px;">2018-08-30</div>
<div class="t " style="top:407.49px;font-size:11px;line-height:14px;color:#333333;left:275.5px;">|</div>
<div class="t " style="top:407.49px;font-size:11px;line-height:14px;color:#333333;left:255px;width:60px;text-align:right;">09:34</div>
<div class="t " style="top:407.49px;font-size:11px;line-height:14px;color:#333333;left:322.9px;">K</div>
<div class="t " style="top:407.49px;font-size:11px;line-height:14px;color:#333333;left:355.8px;">ADM</div>
<div class="t " style="top:407.49px;font-size:11px;line-height:14px;color:#333333;left:430.2px;">ADM sp. z o.o.</div>
<div class="t " style="top:407.49px;font-size:11px;line-height:14px;color:#333333;letter-spacing:0.35px;left:613px;width:80px;text-align:right;">----------</div>
<div class="t " style="top:407.49px;font-size:11px;line-height:14px;color:#333333;letter-spacing:0.35px;left:727px;width:80px;text-align:right;">----------</div>
<div class="t " style="top:407.49px;font-size:11px;line-height:14px;color:#333333;left:873.6px;">Rozwiązanie umowy najmu</div>
<div class="t " style="top:407.49px;font-size:11px;line-height:14px;color:#333333;left:1072.4px;width:60px;text-align:right;">0:00</div>
<div class="t " style="top:407.49px;font-size:11px;line-height:14px;color:#333333;left:1140.6px;">035 234-43-34</div>
<div class="r" style="left:14px;top:427px;width:11px;height:11px;border:1px solid #8f8f8f;background:#ffffff;"></div>
<div class="t " style="top:427.49px;font-size:11px;line-height:14px;color:#333333;left:35.2px;">CRM/8/2018</div>
<div class="t " style="top:427.49px;font-size:11px;line-height:14px;color:#333333;left:138.6px;">ADMIN</div>
<div class="t " style="top:427.49px;font-size:11px;line-height:14px;color:#333333;left:209px;">2018-08-30</div>
<div class="t " style="top:427.49px;font-size:11px;line-height:14px;color:#333333;left:275.5px;">|</div>
<div class="t " style="top:427.49px;font-size:11px;line-height:14px;color:#333333;left:255px;width:60px;text-align:right;">09:35</div>
<div class="t " style="top:427.49px;font-size:11px;line-height:14px;color:#333333;left:322.9px;">K</div>
<div class="t " style="top:427.49px;font-size:11px;line-height:14px;color:#333333;left:355.8px;">MARIZA</div>
<div class="t " style="top:427.49px;font-size:11px;line-height:14px;color:#333333;left:430.2px;">F.H.U. MARIZA</div>
<div class="t " style="top:427.49px;font-size:11px;line-height:14px;color:#333333;letter-spacing:0.35px;left:613px;width:80px;text-align:right;">----------</div>
<div class="t " style="top:427.49px;font-size:11px;line-height:14px;color:#333333;letter-spacing:0.35px;left:727px;width:80px;text-align:right;">----------</div>
<div class="t " style="top:427.49px;font-size:11px;line-height:14px;color:#333333;left:873.6px;">Rozwiązanie umowy najmu</div>
<div class="t " style="top:427.49px;font-size:11px;line-height:14px;color:#333333;left:1072.4px;width:60px;text-align:right;">0:00</div>
<div class="t " style="top:427.49px;font-size:11px;line-height:14px;color:#333333;left:1140.6px;">012 345-54-45</div>
<div class="r" style="left:14px;top:447px;width:11px;height:11px;border:1px solid #8f8f8f;background:#ffffff;"></div>
<div class="t " style="top:447.49px;font-size:11px;line-height:14px;color:#333333;left:35.2px;">CRM/9/2018</div>
<div class="t " style="top:447.49px;font-size:11px;line-height:14px;color:#333333;left:138.6px;">ADMIN</div>
<div class="t " style="top:447.49px;font-size:11px;line-height:14px;color:#333333;left:209px;">2018-08-30</div>
<div class="t " style="top:447.49px;font-size:11px;line-height:14px;color:#333333;left:275.5px;">|</div>
<div class="t " style="top:447.49px;font-size:11px;line-height:14px;color:#333333;left:255px;width:60px;text-align:right;">09:35</div>
<div class="t " style="top:447.49px;font-size:11px;line-height:14px;color:#333333;left:322.9px;">K</div>
<div class="t " style="top:447.49px;font-size:11px;line-height:14px;color:#333333;letter-spacing:-0.75px;left:355.8px;">TWÓJOGRÓD</div>
<div class="t " style="top:447.49px;font-size:11px;line-height:14px;color:#333333;left:430.2px;">Twój Ogród s.c.</div>
<div class="t " style="top:447.49px;font-size:11px;line-height:14px;color:#333333;letter-spacing:0.35px;left:613px;width:80px;text-align:right;">----------</div>
<div class="t " style="top:447.49px;font-size:11px;line-height:14px;color:#333333;letter-spacing:0.35px;left:727px;width:80px;text-align:right;">----------</div>
<div class="t " style="top:447.49px;font-size:11px;line-height:14px;color:#333333;left:873.6px;">Rozwiązanie umowy najmu</div>
<div class="t " style="top:447.49px;font-size:11px;line-height:14px;color:#333333;left:1072.4px;width:60px;text-align:right;">0:00</div>
<div class="t " style="top:447.49px;font-size:11px;line-height:14px;color:#333333;left:1140.6px;">012 444-55-66</div>
<div class="r" style="left:9px;top:639px;width:1892px;height:31px;background:#f0f0f0;"></div>
<div class="r" style="left:9px;top:639px;width:1892px;height:1px;background:#a9a9a9;"></div>
<div class="r" style="left:134px;top:640px;width:1px;height:30px;background:#a9a9a9;"></div>
<div class="r" style="left:204px;top:640px;width:1px;height:30px;background:#a9a9a9;"></div>
<div class="r" style="left:318px;top:640px;width:1px;height:30px;background:#a9a9a9;"></div>
<div class="r" style="left:351px;top:640px;width:1px;height:30px;background:#a9a9a9;"></div>
<div class="r" style="left:426px;top:640px;width:1px;height:30px;background:#a9a9a9;"></div>
<div class="r" style="left:582px;top:640px;width:1px;height:30px;background:#a9a9a9;"></div>
<div class="r" style="left:696px;top:640px;width:1px;height:30px;background:#a9a9a9;"></div>
<div class="r" style="left:810px;top:640px;width:1px;height:30px;background:#a9a9a9;"></div>
<div class="r" style="left:869px;top:640px;width:1px;height:30px;background:#a9a9a9;"></div>
<div class="r" style="left:1053px;top:640px;width:1px;height:30px;background:#a9a9a9;"></div>
<div class="r" style="left:1136px;top:640px;width:1px;height:30px;background:#a9a9a9;"></div>
<div class="r" style="left:1247px;top:640px;width:1px;height:30px;background:#a9a9a9;"></div>
<div class="r" style="left:33px;top:643px;width:99px;height:22px;border:1px solid #a9a9a9;background:#ffffff;"></div>
<div class="t " style="top:648.19px;font-size:11px;line-height:14px;color:#333;left:88px;width:40px;text-align:right;">9</div>
<div class="r" style="left:4px;top:687px;width:8px;height:1px;background:#c9c9c9;"></div>
<div class="r" style="left:83px;top:687px;width:1826px;height:1px;background:#c9c9c9;"></div>
<div class="r" style="left:4px;top:687px;width:1px;height:274px;background:#c9c9c9;"></div>
<div class="r" style="left:1908px;top:687px;width:1px;height:274px;background:#c9c9c9;"></div>
<div class="r" style="left:4px;top:960px;width:1905px;height:1px;background:#c9c9c9;"></div>
<div class="t " style="top:679.49px;font-size:11px;line-height:14px;color:#333;left:15.5px;">Filtr aktywny</div>
<div class="r" style="left:1891px;top:678px;width:14px;height:14px;border:1px solid #b0b0b0;background:#f0f0f0;"></div>
<svg class="s" style="left:1893px;top:680px" width="12" height="12" viewBox="0 0 12 12"><polyline points="2.5,2 6,5.2 9.5,2" fill="none" stroke="#111" stroke-width="1.6"/><polyline points="2.5,6 6,9.2 9.5,6" fill="none" stroke="#111" stroke-width="1.6"/></svg>
<div class="r" style="left:7px;top:710px;width:8px;height:1px;background:#c9c9c9;"></div>
<div class="r" style="left:64px;top:710px;width:275px;height:1px;background:#c9c9c9;"></div>
<div class="r" style="left:7px;top:710px;width:1px;height:41px;background:#c9c9c9;"></div>
<div class="r" style="left:338px;top:710px;width:1px;height:41px;background:#c9c9c9;"></div>
<div class="r" style="left:7px;top:750px;width:332px;height:1px;background:#c9c9c9;"></div>
<div class="t " style="top:701.89px;font-size:11px;line-height:14px;color:#333;left:18.6px;">Obsługa</div>
<div class="r" style="left:9px;top:720px;width:326px;height:27px;border:1px solid #a9a9a9;"></div>
<svg class="s" style="left:15px;top:728px" width="13" height="13" viewBox="0 0 13 13"><circle cx="6.5" cy="6.5" r="6" fill="#ffffff" stroke="#9a9a9a" stroke-width="1"/></svg>
<div class="t " style="top:727.89px;font-size:11px;line-height:14px;color:#333;left:31.6px;">Przed sprzedażą</div>
<svg class="s" style="left:121px;top:728px" width="13" height="13" viewBox="0 0 13 13"><circle cx="6.5" cy="6.5" r="6" fill="#ffffff" stroke="#9a9a9a" stroke-width="1"/></svg>
<div class="t " style="top:727.89px;font-size:11px;line-height:14px;color:#333;left:137.4px;">Po sprzedaży</div>
<svg class="s" style="left:227px;top:728px" width="13" height="13" viewBox="0 0 13 13"><circle cx="6.5" cy="6.5" r="6" fill="#ffffff" stroke="#9a9a9a" stroke-width="1"/><circle cx="6.5" cy="6.5" r="3.3" fill="#555"/></svg>
<div class="t " style="top:727.89px;font-size:11px;line-height:14px;color:#333;left:243.5px;">Wszystkie</div>
<div class="t " style="top:755.79px;font-size:11px;line-height:14px;color:#333;left:9.7px;">Schemat numeracji:</div>
<div class="r" style="left:114px;top:753px;width:217px;height:18px;border:1px solid #a4a4a4;background:#ffffff;"></div>
<div class="r" style="left:317px;top:754px;width:15px;height:18px;background:#f0f0f0;"></div>
<div class="r" style="left:316px;top:754px;width:1px;height:18px;background:#a4a4a4;"></div>
<svg class="s" style="left:320.5px;top:761.0px" width="7" height="4" viewBox="0 0 7 4"><polygon points="0,0 7,0 3.5,4" fill="#555"/></svg>
<div class="t " style="top:756.19px;font-size:11px;line-height:14px;color:#333;left:118px;">-wszystkie-</div>
<div class="r" style="left:13px;top:778px;width:11px;height:11px;border:1px solid #8f8f8f;background:#ffffff;"></div>
<div class="t " style="top:777.39px;font-size:11px;line-height:14px;color:#333;left:29.7px;">Numery</div>
<div class="t " style="top:779.89px;font-size:11px;line-height:14px;color:#333;left:89.7px;">od:</div>
<div class="r" style="left:114px;top:776px;width:93px;height:18px;border:1px solid #a9a9a9;background:#f0f0f0;"></div>
<div class="r" style="left:192px;top:777px;width:1px;height:18px;background:#d0d0d0;"></div>
<div class="r" style="left:193px;top:786px;width:15px;height:1px;background:#d8d8d8;"></div>
<svg class="s" style="left:196.0px;top:778px" width="9" height="16" viewBox="0 0 9 16"><polygon points="1,5 8,5 4.5,1.5" fill="#c4c4c4"/><polygon points="1,11 8,11 4.5,14.5" fill="#c4c4c4"/></svg>
<div class="t " style="top:779.19px;font-size:11px;line-height:14px;color:#333;left:98px;width:90px;text-align:right;">1</div>
<div class="t " style="top:779.89px;font-size:11px;line-height:14px;color:#333;left:214.5px;">do:</div>
<div class="r" style="left:238px;top:776px;width:93px;height:18px;border:1px solid #a9a9a9;background:#f0f0f0;"></div>
<div class="r" style="left:316px;top:777px;width:1px;height:18px;background:#d0d0d0;"></div>
<div class="r" style="left:317px;top:786px;width:15px;height:1px;background:#d8d8d8;"></div>
<svg class="s" style="left:320.0px;top:778px" width="9" height="16" viewBox="0 0 9 16"><polygon points="1,5 8,5 4.5,1.5" fill="#c4c4c4"/><polygon points="1,11 8,11 4.5,14.5" fill="#c4c4c4"/></svg>
<div class="t " style="top:779.19px;font-size:11px;line-height:14px;color:#333;left:222px;width:90px;text-align:right;">1</div>
<div class="r" style="left:12px;top:810px;width:95px;height:20px;border:1px solid #adadad;background:#f0f0f0;"></div>
<div class="r" style="left:92px;top:811px;width:1px;height:20px;background:#c8c8c8;"></div>
<div class="t " style="top:814.39px;font-size:11px;line-height:14px;color:#333;left:11.5px;width:80px;text-align:center;">Kontrahent</div>
<svg class="s" style="left:97px;top:819px" width="8" height="5" viewBox="0 0 8 5"><polygon points="0.5,0.5 7.5,0.5 4,4.5" fill="#555"/></svg>
<div class="r" style="left:115px;top:811px;width:216px;height:18px;border:1px solid #a4a4a4;background:#ffffff;"></div>
<div class="r" style="left:317px;top:812px;width:15px;height:18px;background:#f0f0f0;"></div>
<div class="r" style="left:316px;top:812px;width:1px;height:18px;background:#a4a4a4;"></div>
<svg class="s" style="left:320.5px;top:819.0px" width="7" height="4" viewBox="0 0 7 4"><polygon points="0,0 7,0 3.5,4" fill="#555"/></svg>
<div class="t " style="top:839.69px;font-size:11px;line-height:14px;color:#333;left:10.4px;">Osoba kontaktowa:</div>
<div class="r" style="left:115px;top:835px;width:216px;height:18px;border:1px solid #a4a4a4;background:#ffffff;"></div>
<div class="r" style="left:317px;top:836px;width:15px;height:18px;background:#f0f0f0;"></div>
<div class="r" style="left:316px;top:836px;width:1px;height:18px;background:#a4a4a4;"></div>
<svg class="s" style="left:320.5px;top:843.0px" width="7" height="4" viewBox="0 0 7 4"><polygon points="0,0 7,0 3.5,4" fill="#555"/></svg>
<div class="r" style="left:6px;top:869px;width:8px;height:1px;background:#c9c9c9;"></div>
<div class="r" style="left:65px;top:869px;width:273px;height:1px;background:#c9c9c9;"></div>
<div class="r" style="left:6px;top:869px;width:1px;height:61px;background:#c9c9c9;"></div>
<div class="r" style="left:337px;top:869px;width:1px;height:61px;background:#c9c9c9;"></div>
<div class="r" style="left:6px;top:929px;width:332px;height:1px;background:#c9c9c9;"></div>
<div class="t " style="top:860.89px;font-size:11px;line-height:14px;color:#333;left:17.2px;">Kontakty</div>
<svg class="s" style="left:16px;top:888px" width="13" height="13" viewBox="0 0 13 13"><circle cx="6.5" cy="6.5" r="6" fill="#ffffff" stroke="#9a9a9a" stroke-width="1"/><circle cx="6.5" cy="6.5" r="3.3" fill="#555"/></svg>
<div class="t " style="top:887.49px;font-size:11px;line-height:14px;color:#333;left:32.4px;">Moje</div>
<svg class="s" style="left:116px;top:888px" width="13" height="13" viewBox="0 0 13 13"><circle cx="6.5" cy="6.5" r="6" fill="#ffffff" stroke="#9a9a9a" stroke-width="1"/></svg>
<div class="t " style="top:887.49px;font-size:11px;line-height:14px;color:#333;left:132.6px;">Operatora</div>
<svg class="s" style="left:216px;top:888px" width="13" height="13" viewBox="0 0 13 13"><circle cx="6.5" cy="6.5" r="6" fill="#ffffff" stroke="#9a9a9a" stroke-width="1"/></svg>
<div class="t " style="top:887.49px;font-size:11px;line-height:14px;color:#333;left:232.8px;">Wszystkie</div>
<div class="r" style="left:12px;top:906px;width:98px;height:20px;border:1px solid #d0d0d0;background:#f0f0f0;"></div>
<div class="r" style="left:95px;top:907px;width:1px;height:20px;background:#dcdcdc;"></div>
<div class="t " style="top:910.19px;font-size:11px;line-height:14px;color:#a8a8a8;left:12.0px;width:80px;text-align:center;">Operator</div>
<svg class="s" style="left:99px;top:915px" width="8" height="5" viewBox="0 0 8 5"><polygon points="0.5,0.5 7.5,0.5 4,4.5" fill="#c0c0c0"/></svg>
<div class="r" style="left:118px;top:907px;width:213px;height:18px;border:1px solid #b4b4b4;background:#f0f0f0;"></div>
<div class="r" style="left:317px;top:908px;width:15px;height:18px;background:#f0f0f0;"></div>
<div class="r" style="left:316px;top:908px;width:1px;height:18px;background:#d0d0d0;"></div>
<svg class="s" style="left:320.5px;top:915.0px" width="7" height="4" viewBox="0 0 7 4"><polygon points="0,0 7,0 3.5,4" fill="#b8b8b8"/></svg>
<div class="t " style="top:935.89px;font-size:11px;line-height:14px;color:#333;left:7.6px;">Filtr:</div>
<div class="r" style="left:116px;top:934px;width:1635px;height:18px;border:1px solid #a4a4a4;background:#ffffff;"></div>
<div class="r" style="left:1737px;top:935px;width:15px;height:18px;background:#f0f0f0;"></div>
<div class="r" style="left:1736px;top:935px;width:1px;height:18px;background:#a4a4a4;"></div>
<svg class="s" style="left:1740.5px;top:942.0px" width="7" height="4" viewBox="0 0 7 4"><polygon points="0,0 7,0 3.5,4" fill="#555"/></svg>
<div class="r" style="left:1764px;top:934px;width:31px;height:18px;border:1px solid #dcdcdc;background:#f0f0f0;"></div>
<svg class="s" style="left:1764px;top:934px" width="33" height="20" viewBox="1764 934 33 20">
<defs><linearGradient id="fg1" x1="0" x2="1"><stop offset="0" stop-color="#d8d8d8"/><stop offset="0.5" stop-color="#a8a8a8"/><stop offset="1" stop-color="#c8c8c8"/></linearGradient></defs>
<path d="M1773,939 Q1780,935.5 1788,939 L1782,945 L1781.5,951.5 L1779.5,951.5 L1779,945 Z" fill="url(#fg1)"/>
<ellipse cx="1780.5" cy="939" rx="7.5" ry="2.2" fill="#e0e0e0" stroke="#c0c0c0" stroke-width="0.5"/>
</svg>
<div class="r" style="left:1799px;top:934px;width:19px;height:18px;border:1px solid #444;background:#a8a8a8;"></div>
<svg class="s" style="left:1799px;top:934px" width="21" height="20" viewBox="1799 934 21 20">
<path d="M1805,950 L1806.5,948" stroke="#444" stroke-width="0.8"/>
<ellipse cx="1808" cy="946" rx="4" ry="2.6" fill="#4a6ad0" transform="rotate(-35 1808 946)"/>
<path d="M1806,946 L1812,940.5 L1816,944 L1810,949.5 Z" fill="#5a80e0"/>
<ellipse cx="1813.5" cy="942" rx="3.6" ry="2.8" fill="#80a4f4" transform="rotate(-35 1813.5 942)"/>
</svg>
<div class="r" style="left:1828px;top:934px;width:31px;height:18px;border:1px solid #adadad;background:#f0f0f0;"></div>
<svg class="s" style="left:1828px;top:934px" width="33" height="20" viewBox="1828 934 33 20"><defs><linearGradient id="fo1844" x1="0" x2="1"><stop offset="0" stop-color="#f8c020"/><stop offset="0.45" stop-color="#c87808"/><stop offset="1" stop-color="#f0a020"/></linearGradient></defs>
<path d="M1836,938.5 Q1844,935 1852,938.5 L1845.8,945 L1845.8,951.5 L1842.2,951.5 L1842.2,945 Z" fill="url(#fo1844)"/>
<ellipse cx="1844" cy="938.5" rx="8" ry="2.3" fill="#f8d030"/>
<path d="M1842,937.5 L1851,951.5" stroke="#333" stroke-width="1.8"/><path d="M1842,937.5 L1851,951.5" stroke="#fff" stroke-width="1"/>
<path d="M1844,936.5 L1843.5,939 M1845.5,937 L1843,938.5" stroke="#fff" stroke-width="0.7"/>
</svg>
<div class="r" style="left:1867px;top:934px;width:31px;height:18px;border:1px solid #adadad;background:#f0f0f0;"></div>
<svg class="s" style="left:1867px;top:934px" width="33" height="20" viewBox="1867 934 33 20"><defs><linearGradient id="fo1883" x1="0" x2="1"><stop offset="0" stop-color="#f8c020"/><stop offset="0.45" stop-color="#c87808"/><stop offset="1" stop-color="#f0a020"/></linearGradient></defs>
<path d="M1875,938.5 Q1883,935 1891,938.5 L1884.8,945 L1884.8,951.5 L1881.2,951.5 L1881.2,945 Z" fill="url(#fo1883)"/>
<ellipse cx="1883" cy="938.5" rx="8" ry="2.3" fill="#f8d030"/>
<path d="M1880.5,950.5 L1889.5,938.3 M1879,940.6 L1890,947.4" stroke="#e81010" stroke-width="1.8"/>
</svg>
<div class="r" style="left:1567px;top:704px;width:11px;height:11px;border:1px solid #8f8f8f;background:#ffffff;"></div>
<div class="t " style="top:704.19px;font-size:11px;line-height:14px;color:#333;left:1583.8px;">Wykonanie</div>
<div class="t " style="top:704.09px;font-size:11px;line-height:14px;color:#333;left:1650.7px;">od:</div>
<div class="r" style="left:1675px;top:700px;width:98px;height:18px;border:1px solid #a9a9a9;background:#f0f0f0;"></div>
<div class="r" style="left:1758px;top:701px;width:1px;height:18px;background:#d0d0d0;"></div>
<div class="r" style="left:1759px;top:710px;width:15px;height:1px;background:#d8d8d8;"></div>
<svg class="s" style="left:1762.0px;top:702px" width="9" height="16" viewBox="0 0 9 16"><polygon points="1,5 8,5 4.5,1.5" fill="#c4c4c4"/><polygon points="1,11 8,11 4.5,14.5" fill="#c4c4c4"/></svg>
<div class="t " style="top:703.19px;font-size:11px;line-height:14px;color:#333;left:1664px;width:90px;text-align:right;">0%</div>
<div class="t " style="top:704.09px;font-size:11px;line-height:14px;color:#333;left:1780.6px;">do:</div>
<div class="r" style="left:1804px;top:700px;width:98px;height:18px;border:1px solid #a9a9a9;background:#f0f0f0;"></div>
<div class="r" style="left:1887px;top:701px;width:1px;height:18px;background:#d0d0d0;"></div>
<div class="r" style="left:1888px;top:710px;width:15px;height:1px;background:#d8d8d8;"></div>
<svg class="s" style="left:1891.0px;top:702px" width="9" height="16" viewBox="0 0 9 16"><polygon points="1,5 8,5 4.5,1.5" fill="#c4c4c4"/><polygon points="1,11 8,11 4.5,14.5" fill="#c4c4c4"/></svg>
<div class="t " style="top:703.19px;font-size:11px;line-height:14px;color:#333;left:1793px;width:90px;text-align:right;">0%</div>
<div class="r" style="left:1567px;top:729px;width:11px;height:11px;border:1px solid #8f8f8f;background:#ffffff;"></div>
<div class="t " style="top:729.19px;font-size:11px;line-height:14px;color:#333;left:1583.8px;">Czas łączny</div>
<div class="t " style="top:728.89px;font-size:11px;line-height:14px;color:#333;left:1650.7px;">od:</div>
<div class="r" style="left:1675px;top:725px;width:98px;height:18px;border:1px solid #a9a9a9;background:#f0f0f0;"></div>
<div class="r" style="left:1758px;top:726px;width:1px;height:18px;background:#d0d0d0;"></div>
<div class="r" style="left:1759px;top:735px;width:15px;height:1px;background:#d8d8d8;"></div>
<svg class="s" style="left:1762.0px;top:727px" width="9" height="16" viewBox="0 0 9 16"><polygon points="1,5 8,5 4.5,1.5" fill="#c4c4c4"/><polygon points="1,11 8,11 4.5,14.5" fill="#c4c4c4"/></svg>
<div class="t " style="top:728.19px;font-size:11px;line-height:14px;color:#333;left:1664px;width:90px;text-align:right;">0:00</div>
<div class="t " style="top:728.89px;font-size:11px;line-height:14px;color:#333;left:1780.6px;">do:</div>
<div class="r" style="left:1804px;top:725px;width:98px;height:18px;border:1px solid #a9a9a9;background:#f0f0f0;"></div>
<div class="r" style="left:1887px;top:726px;width:1px;height:18px;background:#d0d0d0;"></div>
<div class="r" style="left:1888px;top:735px;width:15px;height:1px;background:#d8d8d8;"></div>
<svg class="s" style="left:1891.0px;top:727px" width="9" height="16" viewBox="0 0 9 16"><polygon points="1,5 8,5 4.5,1.5" fill="#c4c4c4"/><polygon points="1,11 8,11 4.5,14.5" fill="#c4c4c4"/></svg>
<div class="t " style="top:728.19px;font-size:11px;line-height:14px;color:#333;left:1793px;width:90px;text-align:right;">0:00</div>
<div class="r" style="left:1567px;top:756px;width:11px;height:11px;border:1px solid #8f8f8f;background:#ffffff;"></div>
<div class="t " style="top:756.69px;font-size:11px;line-height:14px;color:#333;left:1583.8px;">Termin</div>
<div class="t " style="top:756.99px;font-size:11px;line-height:14px;color:#333;left:1650.7px;">od:</div>
<div class="r" style="left:1675px;top:753px;width:98px;height:18px;border:1px solid #a9a9a9;background:#f0f0f0;"></div>
<div class="r" style="left:1758px;top:754px;width:1px;height:18px;background:#d0d0d0;"></div>
<div class="r" style="left:1759px;top:763px;width:15px;height:1px;background:#d8d8d8;"></div>
<svg class="s" style="left:1762.0px;top:755px" width="9" height="16" viewBox="0 0 9 16"><polygon points="1,5 8,5 4.5,1.5" fill="#c4c4c4"/><polygon points="1,11 8,11 4.5,14.5" fill="#c4c4c4"/></svg>
<div class="r" style="left:1691px;top:754px;width:1px;height:18px;background:#d0d0d0;"></div>
<svg class="s" style="left:1680px;top:760px" width="8" height="5" viewBox="0 0 8 5"><polygon points="0.5,0.5 7.5,0.5 4,4.5" fill="#c4c4c4"/></svg>
<div class="t " style="top:756.19px;font-size:11px;line-height:14px;color:#333;left:1664px;width:90px;text-align:right;">2018-08-01</div>
<div class="t " style="top:756.99px;font-size:11px;line-height:14px;color:#333;left:1780.6px;">do:</div>
<div class="r" style="left:1804px;top:753px;width:98px;height:18px;border:1px solid #a9a9a9;background:#f0f0f0;"></div>
<div class="r" style="left:1887px;top:754px;width:1px;height:18px;background:#d0d0d0;"></div>
<div class="r" style="left:1888px;top:763px;width:15px;height:1px;background:#d8d8d8;"></div>
<svg class="s" style="left:1891.0px;top:755px" width="9" height="16" viewBox="0 0 9 16"><polygon points="1,5 8,5 4.5,1.5" fill="#c4c4c4"/><polygon points="1,11 8,11 4.5,14.5" fill="#c4c4c4"/></svg>
<div class="r" style="left:1820px;top:754px;width:1px;height:18px;background:#d0d0d0;"></div>
<svg class="s" style="left:1809px;top:760px" width="8" height="5" viewBox="0 0 8 5"><polygon points="0.5,0.5 7.5,0.5 4,4.5" fill="#c4c4c4"/></svg>
<div class="t " style="top:756.19px;font-size:11px;line-height:14px;color:#333;left:1793px;width:90px;text-align:right;">2018-08-31</div>
<div class="r" style="left:1567px;top:778px;width:11px;height:11px;border:1px solid #8f8f8f;background:#ffffff;"></div>
<div class="t " style="top:778.69px;font-size:11px;line-height:14px;color:#333;left:1583.8px;">Godzina</div>
<div class="t " style="top:779.89px;font-size:11px;line-height:14px;color:#333;left:1650.7px;">od:</div>
<div class="r" style="left:1675px;top:776px;width:98px;height:18px;border:1px solid #a9a9a9;background:#f0f0f0;"></div>
<div class="r" style="left:1758px;top:777px;width:1px;height:18px;background:#d0d0d0;"></div>
<div class="r" style="left:1759px;top:786px;width:15px;height:1px;background:#d8d8d8;"></div>
<svg class="s" style="left:1762.0px;top:778px" width="9" height="16" viewBox="0 0 9 16"><polygon points="1,5 8,5 4.5,1.5" fill="#c4c4c4"/><polygon points="1,11 8,11 4.5,14.5" fill="#c4c4c4"/></svg>
<div class="t " style="top:779.19px;font-size:11px;line-height:14px;color:#333;left:1664px;width:90px;text-align:right;">00:00</div>
<div class="t " style="top:779.89px;font-size:11px;line-height:14px;color:#333;left:1780.6px;">do:</div>
<div class="r" style="left:1804px;top:776px;width:98px;height:18px;border:1px solid #a9a9a9;background:#f0f0f0;"></div>
<div class="r" style="left:1887px;top:777px;width:1px;height:18px;background:#d0d0d0;"></div>
<div class="r" style="left:1888px;top:786px;width:15px;height:1px;background:#d8d8d8;"></div>
<svg class="s" style="left:1891.0px;top:778px" width="9" height="16" viewBox="0 0 9 16"><polygon points="1,5 8,5 4.5,1.5" fill="#c4c4c4"/><polygon points="1,11 8,11 4.5,14.5" fill="#c4c4c4"/></svg>
<div class="t " style="top:779.19px;font-size:11px;line-height:14px;color:#333;left:1793px;width:90px;text-align:right;">23:59</div>
<div class="r" style="left:1567px;top:815px;width:11px;height:11px;border:1px solid #8f8f8f;background:#ffffff;"></div>
<svg class="s" style="left:1567px;top:815px" width="13" height="13" viewBox="0 0 13 13"><polyline points="2.5,6.5 5,9.5 10.5,2.5" fill="none" stroke="#444" stroke-width="1.2"/></svg>
<div class="t " style="top:814.89px;font-size:11px;line-height:14px;color:#333;left:1583.8px;">Za okres</div>
<div class="t " style="top:814.89px;font-size:11px;line-height:14px;color:#333;left:1650.7px;">od:</div>
<div class="r" style="left:1675px;top:811px;width:98px;height:18px;border:1px solid #9a9a9a;background:#f0f0f0;"></div>
<div class="r" style="left:1692px;top:812px;width:66px;height:18px;background:#ffffff;"></div>
<div class="r" style="left:1758px;top:812px;width:1px;height:18px;background:#a9a9a9;"></div>
<div class="r" style="left:1759px;top:821px;width:15px;height:1px;background:#a9a9a9;"></div>
<svg class="s" style="left:1762.0px;top:813px" width="9" height="16" viewBox="0 0 9 16"><polygon points="1,5 8,5 4.5,1.5" fill="#333"/><polygon points="1,11 8,11 4.5,14.5" fill="#333"/></svg>
<div class="r" style="left:1691px;top:812px;width:1px;height:18px;background:#a9a9a9;"></div>
<svg class="s" style="left:1680px;top:818px" width="8" height="5" viewBox="0 0 8 5"><polygon points="0.5,0.5 7.5,0.5 4,4.5" fill="#444"/></svg>
<div class="t " style="top:814.19px;font-size:11px;line-height:14px;color:#333;left:1664px;width:90px;text-align:right;">2018-08-30</div>
<div class="t " style="top:814.89px;font-size:11px;line-height:14px;color:#333;left:1780.6px;">do:</div>
<div class="r" style="left:1804px;top:811px;width:98px;height:18px;border:1px solid #9a9a9a;background:#f0f0f0;"></div>
<div class="r" style="left:1821px;top:812px;width:66px;height:18px;background:#ffffff;"></div>
<div class="r" style="left:1887px;top:812px;width:1px;height:18px;background:#a9a9a9;"></div>
<div class="r" style="left:1888px;top:821px;width:15px;height:1px;background:#a9a9a9;"></div>
<svg class="s" style="left:1891.0px;top:813px" width="9" height="16" viewBox="0 0 9 16"><polygon points="1,5 8,5 4.5,1.5" fill="#333"/><polygon points="1,11 8,11 4.5,14.5" fill="#333"/></svg>
<div class="r" style="left:1820px;top:812px;width:1px;height:18px;background:#a9a9a9;"></div>
<svg class="s" style="left:1809px;top:818px" width="8" height="5" viewBox="0 0 8 5"><polygon points="0.5,0.5 7.5,0.5 4,4.5" fill="#444"/></svg>
<div class="t " style="top:814.19px;font-size:11px;line-height:14px;color:#333;left:1793px;width:90px;text-align:right;">2018-08-30</div>
<div class="r" style="left:1567px;top:836px;width:11px;height:11px;border:1px solid #8f8f8f;background:#ffffff;"></div>
<div class="t " style="top:835.89px;font-size:11px;line-height:14px;color:#333;left:1583.8px;">Godzina</div>
<div class="t " style="top:837.49px;font-size:11px;line-height:14px;color:#333;left:1650.7px;">od:</div>
<div class="r" style="left:1675px;top:834px;width:98px;height:18px;border:1px solid #a9a9a9;background:#f0f0f0;"></div>
<div class="r" style="left:1758px;top:835px;width:1px;height:18px;background:#d0d0d0;"></div>
<div class="r" style="left:1759px;top:844px;width:15px;height:1px;background:#d8d8d8;"></div>
<svg class="s" style="left:1762.0px;top:836px" width="9" height="16" viewBox="0 0 9 16"><polygon points="1,5 8,5 4.5,1.5" fill="#c4c4c4"/><polygon points="1,11 8,11 4.5,14.5" fill="#c4c4c4"/></svg>
<div class="t " style="top:837.19px;font-size:11px;line-height:14px;color:#333;left:1664px;width:90px;text-align:right;">00:00</div>
<div class="t " style="top:837.49px;font-size:11px;line-height:14px;color:#333;left:1780.6px;">do:</div>
<div class="r" style="left:1804px;top:834px;width:98px;height:18px;border:1px solid #a9a9a9;background:#f0f0f0;"></div>
<div class="r" style="left:1887px;top:835px;width:1px;height:18px;background:#d0d0d0;"></div>
<div class="r" style="left:1888px;top:844px;width:15px;height:1px;background:#d8d8d8;"></div>
<svg class="s" style="left:1891.0px;top:836px" width="9" height="16" viewBox="0 0 9 16"><polygon points="1,5 8,5 4.5,1.5" fill="#c4c4c4"/><polygon points="1,11 8,11 4.5,14.5" fill="#c4c4c4"/></svg>
<div class="t " style="top:837.19px;font-size:11px;line-height:14px;color:#333;left:1793px;width:90px;text-align:right;">23:59</div>
<div class="t " style="top:861.19px;font-size:11px;line-height:14px;color:#333;left:1565.3px;">Rodzaj:</div>
<div class="r" style="left:1676px;top:858px;width:226px;height:18px;border:1px solid #a4a4a4;background:#ffffff;"></div>
<div class="r" style="left:1888px;top:859px;width:15px;height:18px;background:#f0f0f0;"></div>
<div class="r" style="left:1887px;top:859px;width:1px;height:18px;background:#a4a4a4;"></div>
<svg class="s" style="left:1891.5px;top:866.0px" width="7" height="4" viewBox="0 0 7 4"><polygon points="0,0 7,0 3.5,4" fill="#555"/></svg>
<div class="t " style="top:861.19px;font-size:11px;line-height:14px;color:#333;left:1680px;">-wszystkie-</div>
<div class="t " style="top:884.19px;font-size:11px;line-height:14px;color:#333;left:1565.3px;">Realizacja:</div>
<div class="r" style="left:1676px;top:881px;width:226px;height:18px;border:1px solid #a4a4a4;background:#ffffff;"></div>
<div class="r" style="left:1888px;top:882px;width:15px;height:18px;background:#f0f0f0;"></div>
<div class="r" style="left:1887px;top:882px;width:1px;height:18px;background:#a4a4a4;"></div>
<svg class="s" style="left:1891.5px;top:889.0px" width="7" height="4" viewBox="0 0 7 4"><polygon points="0,0 7,0 3.5,4" fill="#555"/></svg>
<div class="t " style="top:884.19px;font-size:11px;line-height:14px;color:#333;left:1680px;">-wszystkie-</div>
<div class="t " style="top:907.99px;font-size:11px;line-height:14px;color:#333;left:1565.3px;">Zadania:</div>
<div class="r" style="left:1676px;top:905px;width:226px;height:18px;border:1px solid #a4a4a4;background:#ffffff;"></div>
<div class="r" style="left:1888px;top:906px;width:15px;height:18px;background:#f0f0f0;"></div>
<div class="r" style="left:1887px;top:906px;width:1px;height:18px;background:#a4a4a4;"></div>
<svg class="s" style="left:1891.5px;top:913.0px" width="7" height="4" viewBox="0 0 7 4"><polygon points="0,0 7,0 3.5,4" fill="#555"/></svg>
<div class="t " style="top:908.19px;font-size:11px;line-height:14px;color:#333;left:1680px;">-wszystkie-</div>
<div class="r" style="left:1686px;top:968px;width:50px;height:35px;border:1px solid #adadad;background:#f0f0f0;"></div>
<div class="r" style="left:1721px;top:969px;width:1px;height:35px;background:#c8c8c8;"></div>
<svg class="s" style="left:1724px;top:985px" width="8" height="5" viewBox="0 0 8 5"><polygon points="0.5,0.5 7.5,0.5 4,4.5" fill="#666"/></svg>
<svg class="s" style="left:1693px;top:973px" width="23" height="27" viewBox="0 0 23 27">
<polygon points="8.5,1.5 15.5,1.5 15.5,10 22,10 22,18 15.5,18 15.5,26 8.5,26 8.5,18 1.5,18 1.5,10 8.5,10" fill="#128a12"/>
<polygon points="7.5,0.5 14,0.5 14,9 21,9 21,16.5 14,16.5 14,25 7.5,25 7.5,16.5 0.5,16.5 0.5,9 7.5,9" fill="#2ed42e"/>
</svg>
<div class="r" style="left:1743px;top:968px;width:34px;height:35px;border:1px solid #adadad;background:#f0f0f0;"></div>
<svg class="s" style="left:1748px;top:971px" width="26" height="32" viewBox="0 0 26 32">
<path d="M3,29 L13,14" stroke="#b88058" stroke-width="2.2" stroke-linecap="round"/>
<ellipse cx="16.5" cy="9" rx="6.3" ry="7.3" fill="#d8c068"/>
<ellipse cx="16.5" cy="9" rx="4.8" ry="5.8" fill="#7ab8d8"/>
<ellipse cx="15.5" cy="7.5" rx="2.2" ry="2.8" fill="#b8e0f4"/>
</svg>
<div class="r" style="left:1785px;top:968px;width:34px;height:35px;border:1px solid #adadad;background:#f0f0f0;"></div>
<svg class="s" style="left:1790px;top:971px" width="25" height="31" viewBox="0 0 25 31">
<polygon points="3,12 22,12 20,26.5 15,29 9,29 5,26.5" fill="#f0c818"/>
<polygon points="13,13 22,12 20,26.5 15,29 13,29" fill="#c89a08"/>
<polygon points="2,5 6,1.5 18,1 23,4.5 23,10.5 18,13 6,13 2,10.5" fill="#3a64c8"/>
<polygon points="2,5 6,1.5 18,1 23,4.5 18,8 6,8" fill="#6a96f0"/>
<polygon points="13,8 18,8 23,4.5 23,10.5 18,13 13,13" fill="#4a74d8"/>
<circle cx="17.5" cy="8.5" r="2" fill="none" stroke="#fff" stroke-width="1"/>
</svg>
<div class="r" style="left:1870px;top:968px;width:34px;height:35px;border:1px solid #adadad;background:#f0f0f0;"></div>
<svg class="s" style="left:1877px;top:972px" width="24" height="28" viewBox="1877 972 24 28"><path d="M1881.8,980 L1896.5,991" stroke="#b00000" stroke-width="2.9" stroke-linecap="round" transform="translate(0.4,0.5)"/><path d="M1896,976.5 L1883.3,996.3 M1881.8,980 L1896.5,991" stroke="#f00c0c" stroke-width="2.7" stroke-linecap="round"/></svg>
</body></html>
